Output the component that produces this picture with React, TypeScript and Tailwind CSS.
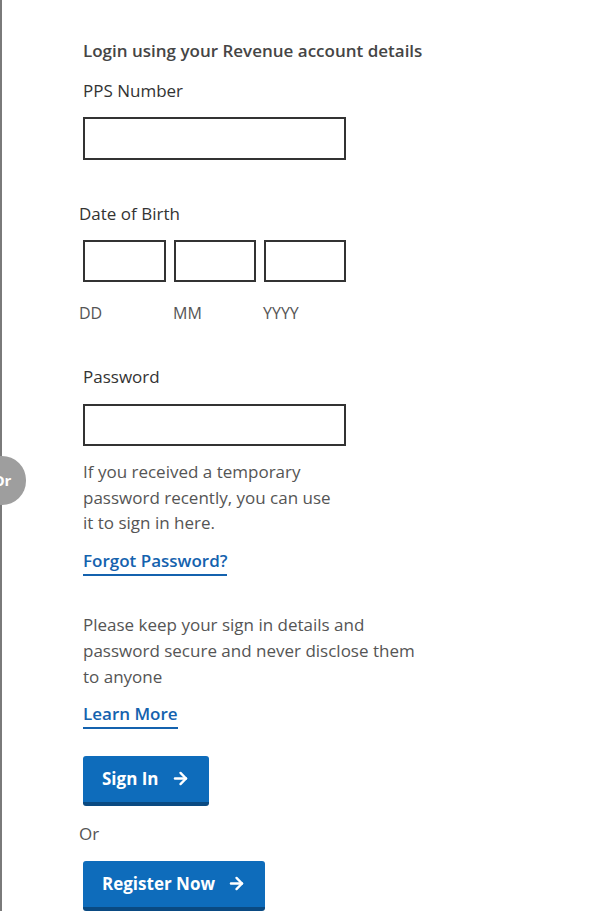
import { ArrowRight } from 'lucide-react';

const font = { fontFamily: '"Open Sans", "Noto Sans", sans-serif' };

function TextBox({ className = '' }: { className?: string }) {
  return <input type="text" className={`block border-2 border-[#333] bg-white outline-none ${className}`} />;
}

function BlueButton({ label, className = '' }: { label: string; className?: string }) {
  return (
    <button
      className={`flex items-center gap-3 h-[50px] px-[19px] rounded-[3px] bg-[#0e6cbb] border-b-[4px] border-[#0a4a82] text-white text-[17px] font-bold ${className}`}
    >
      {label}
      <ArrowRight size={19} strokeWidth={3} />
    </button>
  );
}

function TextLink({ children }: { children: string }) {
  return (
    <a href="#" className="inline-block text-[#1462ae] text-[17px] font-semibold leading-[24px] border-b-2 border-[#1462ae] pb-[1px]">
      {children}
    </a>
  );
}

export default function App() {
  return (
    <div style={font} className="relative min-h-[911px] w-[608px] bg-white overflow-hidden">
      {/* left divider with Or badge */}
      <div className="absolute left-0 top-0 bottom-0 w-[2px] bg-[#7a7a7a]" />
      <div className="absolute left-[-22px] top-[456px] w-[48px] h-[49px] rounded-full bg-[#9e9e9e] flex items-center justify-center text-white text-[15px] font-bold">
        Or
      </div>

      <div className="pl-[83px] pt-[38px] pb-0 text-[17px] leading-[25px] text-[#333]">
        <h2 className="font-semibold text-[#454545] text-[17px] leading-[25px]">Login using your Revenue account details</h2>

        <label className="block mt-[15px]">PPS Number</label>
        <TextBox className="mt-[14px] w-[263px] h-[43px]" />

        <label className="block mt-[41px] -ml-[4px]">Date of Birth</label>
        <div className="flex gap-[8px] mt-[14px]">
          <TextBox className="w-[83px] h-[42px]" />
          <TextBox className="w-[82px] h-[42px]" />
          <TextBox className="w-[82px] h-[42px]" />
        </div>
        <div className="flex mt-[19px] -ml-[4px] text-[16px] leading-[24px] text-[#555]">
          <span className="w-[94px]">DD</span>
          <span className="w-[90px]">MM</span>
          <span>YYYY</span>
        </div>

        <label className="block mt-[39px]">Password</label>
        <TextBox className="mt-[15px] w-[263px] h-[42px]" />

        <p className="mt-[13px] w-[256px] text-[#555] leading-[25.5px]">
          If you received a temporary password recently, you can use it to sign in here.
        </p>

        <div className="mt-[12px]">
          <TextLink>Forgot Password?</TextLink>
        </div>

        <p className="mt-[36px] w-[350px] text-[#555] leading-[26px]">
          Please keep your sign in details and password secure and never disclose them to anyone
        </p>

        <div className="mt-[11px]">
          <TextLink>Learn More</TextLink>
        </div>

        <BlueButton label="Sign In" className="mt-[27px]" />

        <p className="mt-[15px] -ml-[4px] text-[#555]">Or</p>

        <BlueButton label="Register Now" className="mt-[15px]" />
      </div>
    </div>
  );
}
